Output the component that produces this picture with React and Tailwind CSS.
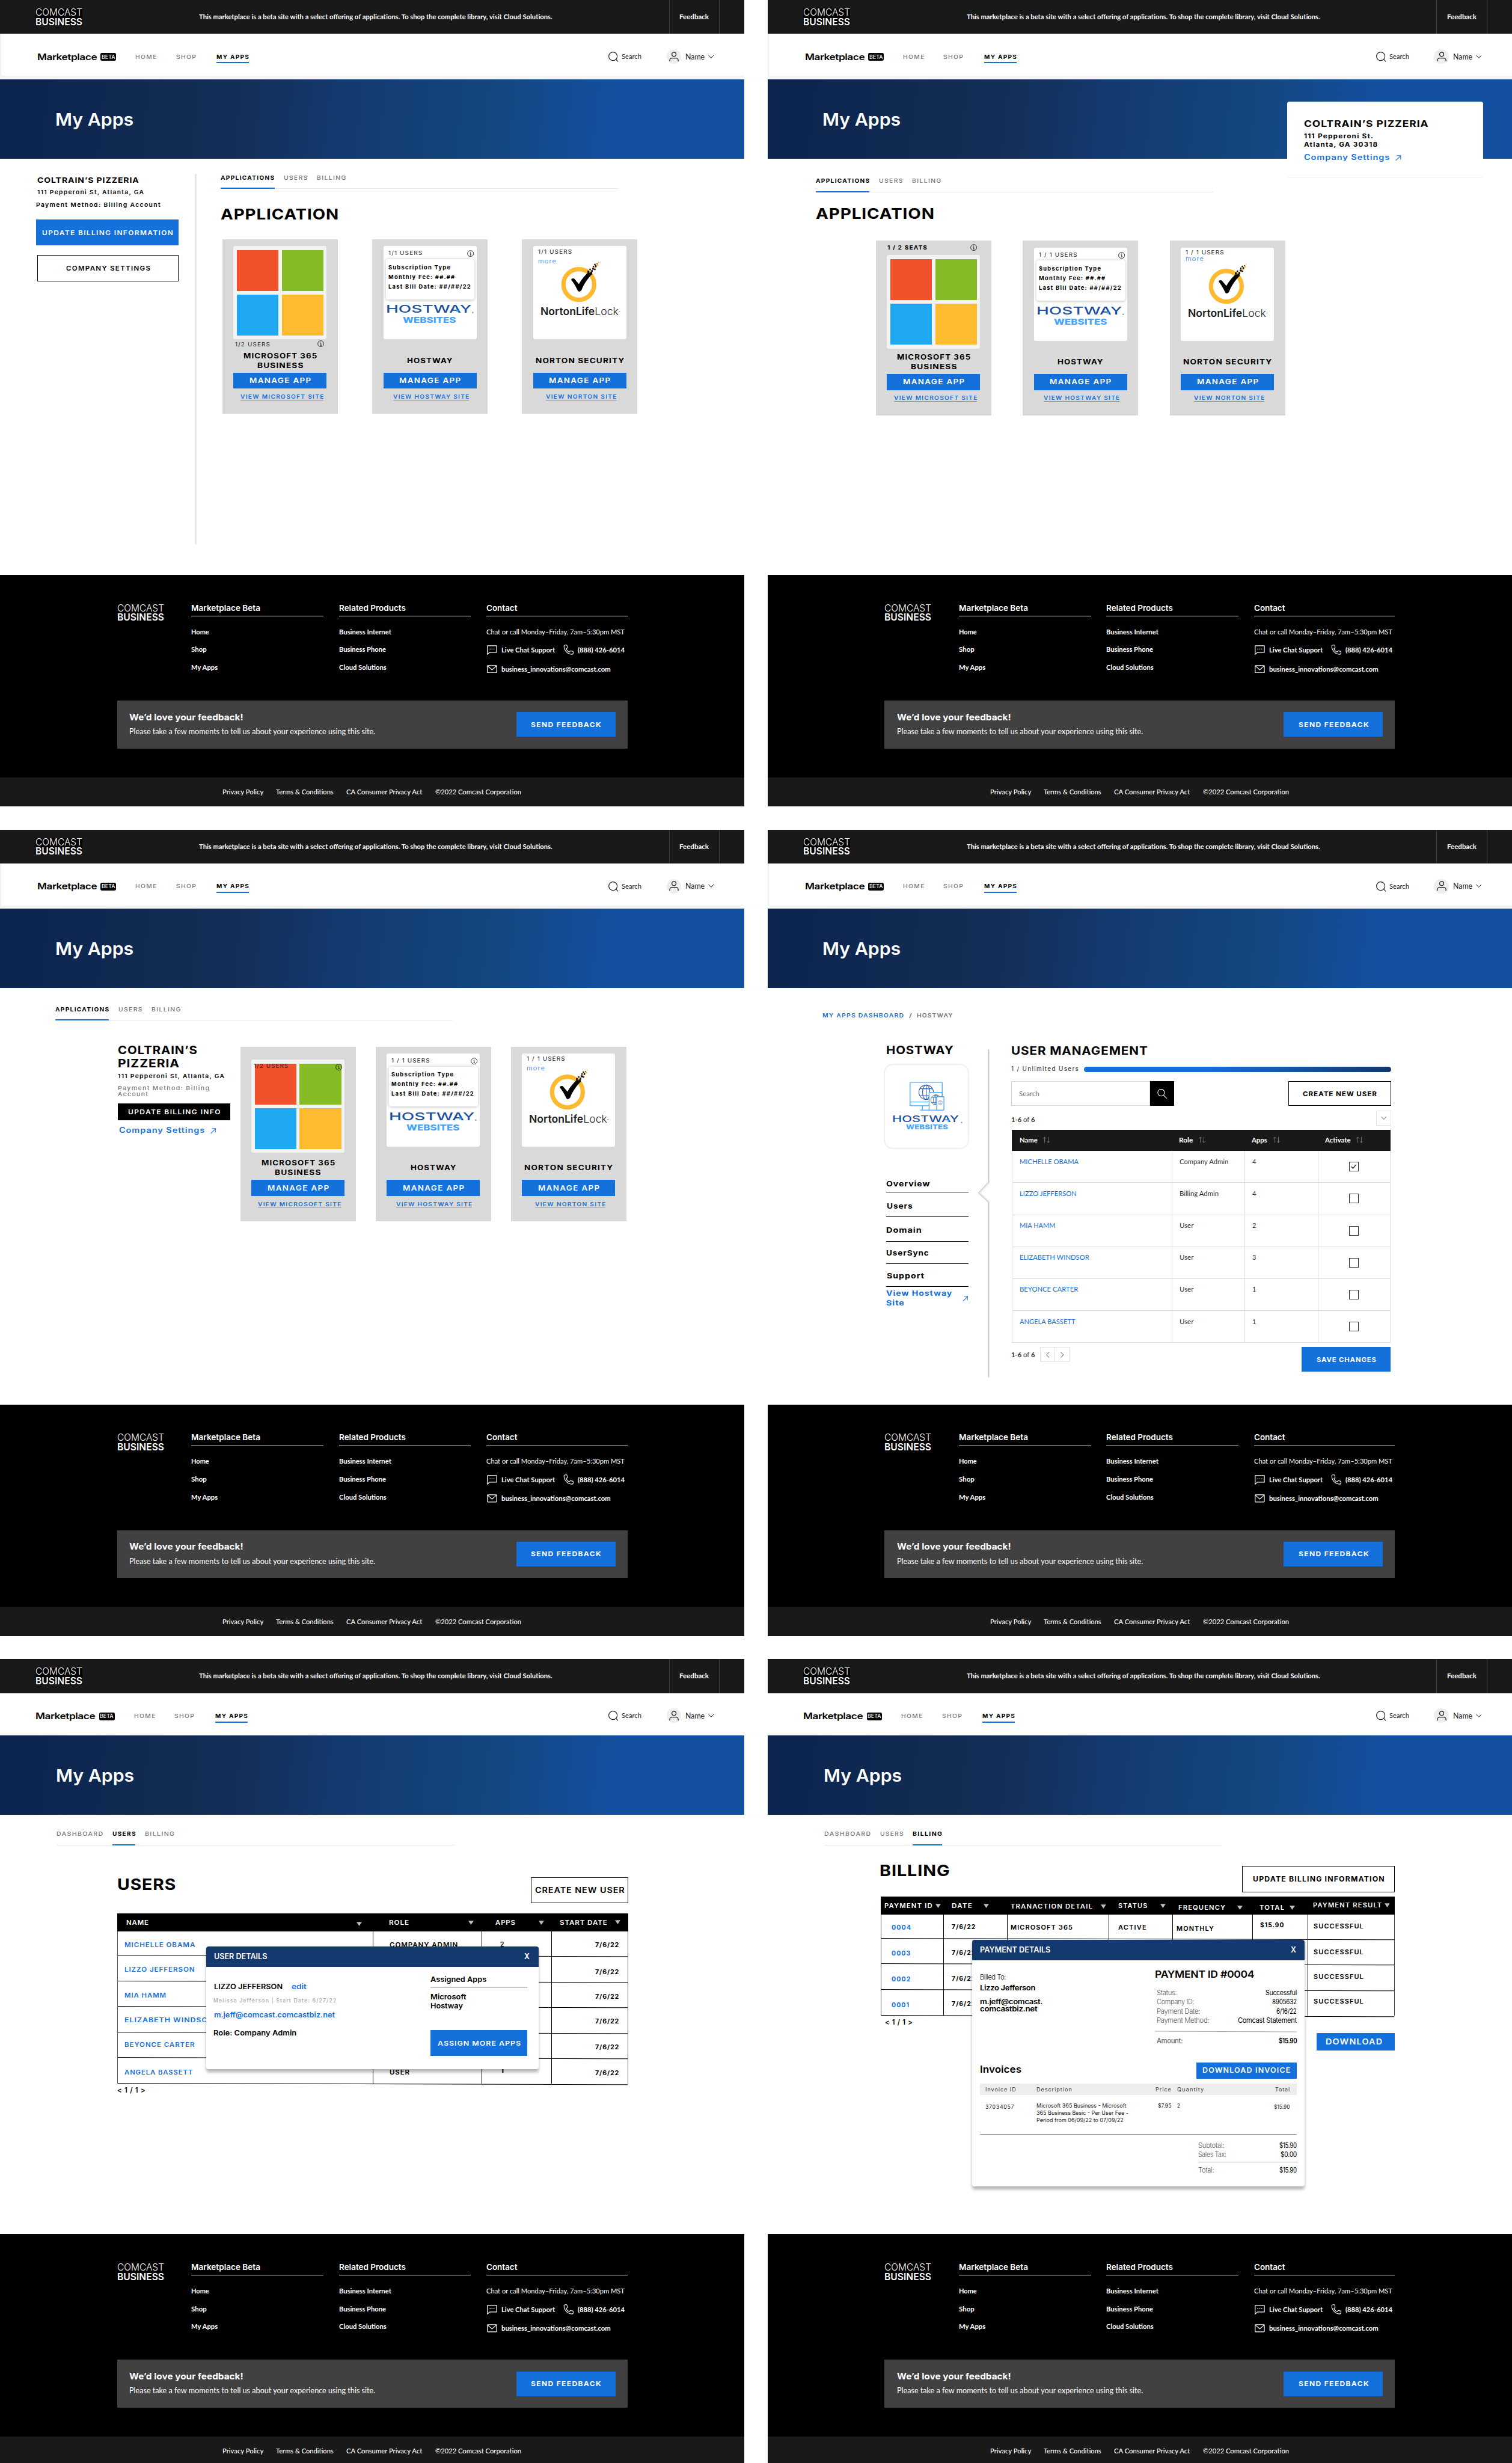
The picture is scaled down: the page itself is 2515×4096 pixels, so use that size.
import { useLayoutEffect, useRef } from 'react';

/* One line of text, stretched horizontally to the width of its box. */
function T({ className = '', children }) {
  const box = useRef(null);
  const ink = useRef(null);
  useLayoutEffect(() => {
    const o = box.current;
    const i = ink.current;
    i.style.transform = 'none';
    const factor = o.getBoundingClientRect().width / o.offsetWidth;
    const tracking = parseFloat(getComputedStyle(i).letterSpacing) || 0;
    const natural = i.getBoundingClientRect().width / factor - tracking;
    if (natural > 0) i.style.transform = `scaleX(${o.offsetWidth / natural})`;
  }, [children]);
  return (
    <span ref={box} className={`block h-[20px] shrink-0 whitespace-nowrap leading-[20px] ${className}`}>
      <span ref={ink} className="inline-block origin-left">{children}</span>
    </span>
  );
}

/* ---------- icons ---------- */

function InfoIcon({ className = '' }) {
  return (
    <svg viewBox="0 0 14 14" className={`h-[14px] w-[14px] shrink-0 ${className}`} fill="none" stroke="#000" strokeWidth="1">
      <circle cx="7" cy="7" r="6.2" />
      <path d="M5.8 5.9h1.4v4.3M5.6 10.3h3" />
      <circle cx="7" cy="3.8" r=".7" fill="#000" stroke="none" />
    </svg>
  );
}

function ArrowUpRight({ className = '' }) {
  return (
    <svg viewBox="0 0 12 12" className={`h-[12px] w-[12px] shrink-0 ${className}`} fill="none" stroke="#1470db" strokeWidth="1.4">
      <path d="M1 11L11 1M3 1h8v8" />
    </svg>
  );
}

function Chevron({ className = '' }) {
  return (
    <svg viewBox="0 0 12 8" className={`h-[8px] w-[12px] shrink-0 ${className}`} fill="none" stroke="currentColor" strokeWidth="1.2">
      <path d="M.5 1L6 6.8L11.5 1" />
    </svg>
  );
}

function SortArrows() {
  return (
    <svg viewBox="0 0 16 14" className="ml-[11px] mt-[2px] h-[14px] w-[16px]" fill="none" stroke="#8c8c8c" strokeWidth="1">
      <path d="M4.5 13V1.2M1.2 4.5L4.5 1.2L7.8 4.5M11.8 1v11.8M8.8 9.6l3 3.2l3-3.2" />
    </svg>
  );
}

function Triangle({ className = '' }) {
  return (
    <svg viewBox="0 0 12 9" className={`h-[9px] w-[11px] shrink-0 ${className}`}>
      <path d="M0 0h12L6 9z" fill="#bdbdbd" />
    </svg>
  );
}

function DevicesIcon() {
  return (
    <svg viewBox="0 0 72 60" className="ml-[51px] h-[60px] w-[72px]" fill="none" stroke="#45a3fb" strokeWidth="1.6">
      <rect x="1" y="1" width="66.5" height="48.5" rx="1.5" />
      <path d="M1 41.7H41M26.5 50v8.7M21.5 58.7H42" />
      <g stroke="#2c5aa6" strokeWidth="1.4">
        <circle cx="34.3" cy="21.7" r="15" />
        <ellipse cx="34.3" cy="21.7" rx="7.5" ry="15" />
        <path d="M34.3 6.7v30M21.5 14.4h25.6M21.5 29h25.6" />
      </g>
      <rect x="40.3" y="21.8" width="27" height="36.9" rx="1" fill="#fff" />
      <g stroke="#2c5aa6" strokeWidth="1.1">
        <circle cx="54.5" cy="37.5" r="10.5" />
        <ellipse cx="54.5" cy="37.5" rx="5.2" ry="10.5" />
        <path d="M54.5 27v21M45.6 32.4h18M45.6 42.6h18" />
      </g>
      <rect x="56" y="30.8" width="15" height="27.9" rx="1" fill="#fff" />
      <circle cx="63.6" cy="43" r="4.2" stroke="#7f97bf" strokeWidth=".9" />
      <path d="M59.5 41.4h8.2M59.5 44.6h8.2M63.6 39v8" stroke="#7f97bf" strokeWidth=".8" />
    </svg>
  );
}

function CompanyLogo() {
  return (
    <div className="w-[97px] text-[20px] text-white">
      <T className="w-[97px] font-light">COMCAST</T>
      <T className="-mt-[0.5px] w-[97px] font-semibold">BUSINESS</T>
    </div>
  );
}

/* ---------- page chrome ---------- */

function Header({ compact }) {
  return (
    <header>
      <div className="flex h-[70px] items-start bg-[#191919] pl-[74px]">
        <div className="mt-[18px] h-[34px] bg-black">
          <div className="-mt-[3px]">
            <CompanyLogo />
          </div>
        </div>
        <T className="ml-[241px] mt-[25px] w-[731px] font-['Lato',sans-serif] text-[14px] font-bold text-white">
          This marketplace is a beta site with a select offering of applications. To shop the complete library, visit Cloud Solutions.
        </T>
        <div className="ml-[241px] flex h-[70px] w-[105px] justify-center border-x border-[#3d3d3d] pt-[25px]">
          <T className="w-[61px] font-['Lato',sans-serif] text-[14px] font-bold text-white">Feedback</T>
        </div>
      </div>

      <div className={compact ? 'h-[88px]' : 'h-[94px] bg-gradient-to-b from-[#f1f1f1] from-90% to-[#f8f8f8]'}>
        <nav className="ml-[4px] flex h-[87px] items-start bg-white pr-[63px] pt-[38px] shadow-[-1px_0_0_#fff]">
          <T className={`w-[124px] text-[18px] font-semibold tracking-[-0.5px] ${compact ? 'ml-[70px]' : 'ml-[73px]'}`}>Marketplace</T>
          <div className="ml-[7px] mt-[2px] flex h-[16px] w-[32px] items-center justify-center rounded-[3px] bg-black">
            <T className="w-[28px] text-[11.500px] font-medium text-white">BETA</T>
          </div>
          <T className="ml-[40px] w-[44px] text-[11.5px] font-medium tracking-[1.5px] text-[#757575]">HOME</T>
          <T className="ml-[40px] w-[41px] text-[11.5px] font-medium tracking-[1.5px] text-[#757575]">SHOP</T>
          <div className="ml-[43px] h-[23px] border-b-[3px] border-[#1470db]">
            <T className="w-[67px] text-[11.5px] font-bold tracking-[1.5px]">MY APPS</T>
          </div>
          <svg viewBox="0 0 21 21" className="-mt-[1px] ml-auto h-[21px] w-[21px]" fill="none" stroke="#191919" strokeWidth="1.4">
            <circle cx="9.5" cy="9.5" r="8.7" />
            <path d="M15.3 15.3L20 20.3" />
          </svg>
          <T className="ml-[6px] mt-[-1px] w-[41px] font-['Lato',sans-serif] text-[14.5px] text-[#191919]">Search</T>
          <div className="-mt-[6px] ml-[52px] flex h-[30px] w-[30px] items-center justify-center rounded-full bg-[#eee]">
            <svg viewBox="0 0 20 21" className="h-[21px] w-[20px]" fill="none" stroke="#191919" strokeWidth="1.6">
              <circle cx="10" cy="5.4" r="4.3" />
              <path d="M1.2 20.3v-2.6a4.6 4.6 0 0 1 4.6-4.6h8.4a4.6 4.6 0 0 1 4.6 4.6v2.6" />
            </svg>
          </div>
          <T className="ml-[9px] w-[40px] font-['Lato',sans-serif] text-[15.5px] text-[#191919]">Name</T>
          <Chevron className="ml-[7px] mt-[5px] text-black" />
        </nav>
      </div>

      <div className="h-[164px] bg-[linear-gradient(96deg,#0b2450_0%,#102a52_18%,#142f57_32%,#133a70_46%,#144680_66%,#1450a0_82%,#1450a0_100%)] pt-[73px]">
        <T className={`w-[162px] text-[35px] font-semibold text-white ${compact ? 'ml-[116px]' : 'ml-[114px]'}`}>My Apps</T>
      </div>
    </header>
  );
}

function FooterColumn({ className, titleWidth, title, children }) {
  return (
    <div className={className}>
      <div className="h-[28px] border-b border-white text-[17px] font-semibold text-white">
        <T className={titleWidth}>{title}</T>
      </div>
      <div className="mt-[22px] font-['Lato',sans-serif] text-[14.5px] font-bold text-white">{children}</div>
    </div>
  );
}

function Footer() {
  return (
    <footer>
      <div className="h-[419px] bg-black px-[242px] pt-[58px]">
        <div className="flex h-[202px] items-start">
          <CompanyLogo />
          <FooterColumn className="ml-[57px] w-[273px]" titleWidth="w-[143px]" title="Marketplace Beta">
            <T className="w-[37px]">Home</T>
            <T className="mt-[17px] w-[32px]">Shop</T>
            <T className="mt-[17px] w-[55px]">My Apps</T>
          </FooterColumn>
          <FooterColumn className="ml-[32px] w-[273px]" titleWidth="w-[138px]" title="Related Products">
            <T className="w-[108px]">Business Internet</T>
            <T className="mt-[17px] w-[97px]">Business Phone</T>
            <T className="mt-[17px] w-[98px]">Cloud Solutions</T>
          </FooterColumn>
          <FooterColumn className="ml-[32px] w-[292px]" titleWidth="w-[64px]" title="Contact">
            <T className="w-[286px] font-normal">Chat or call Monday–Friday, 7am–5:30pm MST</T>
            <div className="mt-[18px] flex items-start">
              <svg viewBox="0 0 21 20" className="ml-[2px] h-[20px] w-[21px]" fill="none" stroke="#fff" strokeWidth="1.5">
                <path d="M1 19V1.2h19v13.6H5.5z" strokeLinejoin="round" />
                <path d="M5.5 8h2M9.5 8h2M13.5 8h2" />
              </svg>
              <T className="ml-[9px] w-[111px]">Live Chat Support</T>
              <svg viewBox="0 0 22 22" className="-mt-[1px] ml-[17px] h-[21px] w-[22px]" fill="none" stroke="#fff" strokeWidth="1.4" strokeLinejoin="round">
                <path d="M1 3C1 1.600 2.500 1 4 1h2.200c.8 0 1.200.5 1.300 1.200l.8 4c.1.600-.1 1.100-.6 1.500L5.600 9.200c1.200 3 3.500 5.600 6.900 7l1.700-2.100c.4-.5.9-.6 1.500-.5l3.900.9c.8.200 1.300.700 1.300 1.500V18c0 1.800-1 3-2.800 3C8.600 21 1 12.500 1 3z" />
              </svg>
              <T className="ml-[8px] w-[97px]">(888) 426-6014</T>
            </div>
            <div className="mt-[19px] flex items-center">
              <svg viewBox="0 0 21 17" className="ml-[2px] h-[17px] w-[21px]" fill="none" stroke="#fff" strokeWidth="1.5">
                <rect x="1" y="1" width="19" height="15" rx="1" />
                <path d="M1.500 2L10.500 10L19.500 2" />
              </svg>
              <T className="ml-[9px] w-[226px]">business_innovations@comcast.com</T>
            </div>
          </FooterColumn>
        </div>
        <div className="flex h-[99px] items-center justify-between bg-[#414141] pl-[26px] pr-[25px]">
          <div className="-mt-[1px] text-white">
            <T className="w-[236px] text-[17.5px] font-bold">We’d love your feedback!</T>
            <T className="mt-[9px] w-[509px] font-['Lato',sans-serif] text-[16px]">
              Please take a few moments to tell us about your experience using this site.
            </T>
          </div>
          <div className="flex h-[51px] w-[205px] items-center justify-center bg-[#1470db]">
            <T className="w-[145px] text-[13.5px] font-bold tracking-[1.5px] text-white">SEND FEEDBACK</T>
          </div>
        </div>
      </div>
      <div className="flex h-[60px] items-start gap-[26.5px] bg-[#191919] pl-[460px] pt-[20px] font-['Lato',sans-serif] text-[14.5px] font-medium text-white">
        <T className="w-[85px]">Privacy Policy</T>
        <T className="w-[119px]">Terms &amp; Conditions</T>
        <T className="w-[157px]">CA Consumer Privacy Act</T>
        <T className="w-[178px]">©2022 Comcast Corporation</T>
      </div>
    </footer>
  );
}

function Screen({ compact, children }) {
  return (
    <section className="relative h-[1668px] w-[1540px] overflow-hidden bg-white">
      <Header compact={compact} />
      <div className={compact ? 'h-[867px]' : 'h-[861px]'}>{children}</div>
      <Footer />
    </section>
  );
}

function Tabs({ items, active }) {
  return (
    <div className="flex h-[33px] w-[822px] gap-[19.500px] border-b border-[#e6e6e6]">
      {items.map(([label, width]) => (
        <div key={label} className={`h-[33px] ${label === active ? 'border-b-[3px] border-[#1470db]' : ''}`}>
          <T className={`text-[11.5px] tracking-[1.5px] ${width} ${label === active ? 'font-bold text-black' : 'font-medium text-[#757575]'}`}>
            {label}
          </T>
        </div>
      ))}
    </div>
  );
}

const APP_TABS = [['APPLICATIONS', 'w-[111px]'], ['USERS', 'w-[49px]'], ['BILLING', 'w-[60px]']];
const DASH_TABS = [['DASHBOARD', 'w-[96px]'], ['USERS', 'w-[48px]'], ['BILLING', 'w-[61px]']];

/* ---------- app cards ---------- */

function SiteLink({ className, width, children }) {
  return (
    <a className={`block h-[17px] border-b border-[#5b96dd] text-[11.8px] font-semibold tracking-[1.5px] text-[#1470db] ${className}`}>
      <T className={width}>{children}</T>
    </a>
  );
}

function AppCard({ title, link, children }) {
  return (
    <div className="h-[361px] w-[239px] bg-[#d9d9d9] px-[23px]">
      <div className="h-[231px]">{children}</div>
      <div className="flex h-[40px] flex-col items-center justify-center text-[14.5px] font-bold tracking-[1.2px]">{title}</div>
      <div className="mt-[5px] flex h-[33px] items-center justify-center bg-[#1470db]">
        <T className="w-[127px] text-[15px] font-semibold tracking-[1.5px] text-white">MANAGE APP</T>
      </div>
      <div className="mt-[7px]">{link}</div>
    </div>
  );
}

function MicrosoftTile({ children }) {
  return (
    <div className="relative grid h-[193px] w-[193px] grid-cols-2 gap-[7px] rounded-[4px] bg-[#f3f3f3] px-[7px] py-[8px]">
      <div className="bg-[#f1512b]" />
      <div className="bg-[#85bc25]" />
      <div className="bg-[#1ea8f2]" />
      <div className="bg-[#fdbb2f]" />
      {children}
    </div>
  );
}

function HostwayWordmark({ small }) {
  return (
    <div className="relative">
      <T className={small ? 'ml-[15px] w-[138px] text-[17.5px] font-medium text-[#1c4f9f]' : 'ml-[5px] w-[177px] text-[22px] font-medium text-[#1c4f9f]'}>
        HOSTWAY
      </T>
      <T
        className={
          small
            ? 'ml-[43px] -mt-[3px] w-[87px] text-[13px] font-extrabold text-[#45a3fb]'
            : 'ml-[41px] mt-[2px] w-[110px] text-[16.5px] font-extrabold text-[#45a3fb]'
        }
      >
        WEBSITES
      </T>
      <svg viewBox="0 0 193 20" preserveAspectRatio="none" className={`absolute left-0 top-0 h-[20px] ${small ? 'w-[166px]' : 'w-[193px]'}`}>
        <path d="M151 10.500l5.200 3l-5.200 3z" fill="#1bb5f5" />
        <circle cx="184.500" cy="17" r="1.600" fill="#7f9ac8" />
      </svg>
    </div>
  );
}

function HostwayCard({ users, usersWidth }) {
  return (
    <AppCard
      title={<T className="w-[94px]">HOSTWAY</T>}
      link={<SiteLink className="ml-[20px] w-[157px]" width="w-[157px]">VIEW HOSTWAY SITE</SiteLink>}
    >
      <div className="pt-[14px]">
        <div className="h-[193px] w-[193px] rounded-[4px] bg-white pt-[5px]">
          <div className="flex h-[22px] items-start pl-[10px] pr-[5px]">
            <T className={`text-[11.5px] tracking-[1.3px] text-[#222] ${usersWidth}`}>{users}</T>
            <InfoIcon className="ml-auto mt-[4px]" />
          </div>
          <div className="relative ml-[5px] h-[83px] w-[184px] rounded-[5px] bg-white pl-[5px] pt-[7px] text-[11.5px] font-bold tracking-[1.6px] shadow-[0_1px_6px_rgba(0,0,0,0.25)]">
            <div className="absolute right-[4px] -top-[3px] h-[7px] w-[7px] rotate-45 bg-white" />
            <T className="w-[128px]">Subscription Type</T>
            <T className="w-[137px]">Monthly Fee: ##.##</T>
            <T className="w-[170px]">Last Bill Date: ##/##/22</T>
          </div>
          <div className="mt-[11px]">
            <HostwayWordmark />
          </div>
        </div>
      </div>
    </AppCard>
  );
}

function NortonCard({ users, usersWidth, tight }) {
  return (
    <AppCard
      title={<T className="w-[183px]">NORTON SECURITY</T>}
      link={<SiteLink className="ml-[27px] w-[146px]" width="w-[146px]">VIEW NORTON SITE</SiteLink>}
    >
      <div className="pt-[14px]">
        <div className="relative h-[193px] w-[193px] rounded-[4px] bg-white">
          <svg viewBox="0 0 193 193" className="absolute inset-0 h-[193px] w-[193px]">
            <circle cx="94.300" cy="79.700" r="31.800" fill="none" stroke="#fdb92f" strokeWidth="9" />
            <path d="M78.500 70c.5-3 5.500-4 8-.5L94.500 79C98 71.500 106 62 114 54l7 5c-9 9-17 21-20.500 31c-1.500 5-7.500 6-9 1.500C89 86 84 77 78.500 70z" fill="#000" />
            <path d="M112 51h4v4h-4zM116 47h3v3h-3zM119 50h4v4h-4zM122 45h4v4h-4zM117 54h5v5h-5zM126 47h3v3h-3zM123 41h3v3h-3zM128 40h3v4h-3zM126 37h3v3h-3zM131 36h2v2h-2z" fill="#111" />
            <path d="M125 43h3v3h-3zM134 33h2v2h-2zM131 38h3v3h-3zM118 51h2v2h-2zM133 39h2v2h-2z" fill="#fdb92f" />
          </svg>
          <div className={`h-[126px] pl-[10px] text-[11.5px] tracking-[1.3px] ${tight ? 'pt-[1px]' : 'pt-[2px]'}`}>
            <T className={`text-[#222] ${usersWidth}`}>{users}</T>
            <T className={`w-[37px] font-light text-[#1470db] ${tight ? '-mt-[7px]' : ''}`}>more</T>
          </div>
          <T className="ml-[15px] w-[165px] text-[22px] font-semibold text-[#1c1c1c]">
            NortonLife<span className="font-light">Lock</span>
            <sup className="text-[6px] font-light">™</sup>
          </T>
        </div>
      </div>
    </AppCard>
  );
}

const microsoftTitle = (
  <>
    <T className="w-[152px]">MICROSOFT 365</T>
    <T className="w-[95px]">BUSINESS</T>
  </>
);
const microsoftLink = <SiteLink className="ml-[14px] w-[172px]" width="w-[172px]">VIEW MICROSOFT SITE</SiteLink>;

function SettingsLink({ className }) {
  return (
    <div className={`flex items-start ${className}`}>
      <T className="w-[177px] text-[15.5px] font-semibold tracking-[1px] text-[#1470db]">Company Settings</T>
      <ArrowUpRight className="ml-[12px] mt-[5px]" />
    </div>
  );
}

/* ---------- screens ---------- */

function SidebarDashboard() {
  return (
    <Screen>
      <div className="flex items-start">
        <div className="ml-[77px] w-[293px] pt-[35px] text-[11.5px] font-semibold tracking-[1.5px]">
          <T className="w-[210px] text-[15px] font-bold tracking-[1px]">COLTRAIN’S PIZZERIA</T>
          <T className="mt-[5px] w-[220px]">111 Pepperoni St, Atlanta, GA</T>
          <T className="-ml-[2px] mt-[6px] w-[257px]">Payment Method: Billing Account</T>
          <div className="-ml-[3px] mt-[20px] flex h-[54px] w-[296px] items-center justify-center bg-[#1470db] text-[13.5px] text-white">
            <T className="w-[271px]">UPDATE BILLING INFORMATION</T>
          </div>
          <div className="mt-[20px] flex h-[54px] w-[293px] items-center justify-center border-2 border-black text-[13.5px]">
            <T className="w-[174px]">COMPANY SETTINGS</T>
          </div>
        </div>
        <div className="ml-[33px] mt-[32px] h-[766px] w-[4px] rounded-full bg-[#e7e7e7] shadow-[0_0_2px_#eee]" />
        <div className="ml-[50px] pt-[30px]">
          <Tabs items={APP_TABS} active="APPLICATIONS" />
          <T className="mt-[42px] w-[244px] text-[31px] font-bold tracking-[1px]">APPLICATION</T>
          <div className="ml-[3px] mt-[42px] flex gap-[71px]">
            <AppCard title={microsoftTitle} link={microsoftLink}>
              <div className="pt-[14px]">
                <MicrosoftTile />
                <div className="mt-[1px] flex items-start pl-[4px] pr-[5px]">
                  <T className="w-[72px] text-[11.5px] tracking-[1.3px] text-[#222]">1/2 USERS</T>
                  <InfoIcon className="ml-auto mt-[1px]" />
                </div>
              </div>
            </AppCard>
            <HostwayCard users="1/1 USERS" usersWidth="w-[70px]" />
            <NortonCard users="1/1 USERS" usersWidth="w-[70px]" />
          </div>
        </div>
      </div>
    </Screen>
  );
}

function FloatingCardDashboard() {
  return (
    <Screen>
      <div className="absolute left-[1075px] top-[210px] h-[156px] w-[405px] rounded-[5px] bg-white pl-[35px] pt-[36px] text-[12.5px] font-bold tracking-[1.300px] shadow-[0_1px_0_#e6e6e6]">
        <T className="w-[257px] text-[18px] tracking-[1px]">COLTRAIN’S PIZZERIA</T>
        <T className="mt-[5px] w-[143px]">111 Pepperoni St.</T>
        <T className="-mt-[3px] w-[152px]">Atlanta, GA 30318</T>
        <SettingsLink className="mt-[8px]" />
      </div>
      <div className="pl-[100px] pt-[37px]">
        <Tabs items={APP_TABS} active="APPLICATIONS" />
        <T className="mt-[34px] w-[245px] text-[31px] font-bold tracking-[1px]">APPLICATION</T>
        <div className="ml-[124px] mt-[46px] flex gap-[65px]">
          <AppCard title={microsoftTitle} link={microsoftLink}>
            <div className="pt-[5px]">
              <div className="flex h-[25px] items-start pl-[1px] pr-[6px]">
                <T className="w-[82px] text-[11.5px] font-bold tracking-[1.3px]">1 / 2 SEATS</T>
                <InfoIcon className="ml-auto mt-[2px]" />
              </div>
              <MicrosoftTile />
            </div>
          </AppCard>
          <HostwayCard users="1 / 1 USERS" usersWidth="w-[79px]" />
          <NortonCard users="1 / 1 USERS" usersWidth="w-[79px]" tight />
        </div>
      </div>
    </Screen>
  );
}

function CompactDashboard() {
  return (
    <Screen>
      <div className="pl-[114px] pt-[34px]">
        <Tabs items={APP_TABS} active="APPLICATIONS" />
        <div className="ml-[130px] mt-[52px] flex items-start">
          <div className="w-[253px] text-[11.5px] font-semibold tracking-[1.500px]">
            <div className="text-[23.5px] font-bold tracking-[1px]">
              <T className="w-[164px]">COLTRAIN’S</T>
              <T className="mt-[7px] w-[127px]">PIZZERIA</T>
            </div>
            <T className="mt-[7px] w-[220px]">111 Pepperoni St, Atlanta, GA</T>
            <T className="mt-[4px] w-[189px] font-medium text-[#757575]">Payment Method: Billing</T>
            <T className="-mt-[7px] w-[62px] font-medium text-[#757575]">Account</T>
            <div className="mt-[8px] flex h-[35px] w-[233px] items-center justify-center bg-black text-[13.5px] text-white">
              <T className="w-[191px]">UPDATE BILLING INFO</T>
            </div>
            <SettingsLink className="ml-[2px] mt-[11px]" />
          </div>
          <div className="mt-[2px] flex gap-[41px]">
            <AppCard title={microsoftTitle} link={microsoftLink}>
              <div className="pt-[27px]">
                <MicrosoftTile>
                  <div className="absolute inset-x-[5px] top-[4px] flex items-start justify-between">
                    <T className="w-[71px] text-[11.5px] tracking-[1.3px] text-[#222]">1/2 USERS</T>
                    <InfoIcon className="mt-[5px]" />
                  </div>
                </MicrosoftTile>
              </div>
            </AppCard>
            <HostwayCard users="1 / 1 USERS" usersWidth="w-[79px]" />
            <NortonCard users="1 / 1 USERS" usersWidth="w-[79px]" />
          </div>
        </div>
      </div>
    </Screen>
  );
}

const HOSTWAY_USERS = [
  ['MICHELLE OBAMA', 'w-[122px]', 'Company Admin', 'w-[101px]', '4', true],
  ['LIZZO JEFFERSON', 'w-[118px]', 'Billing Admin', 'w-[81px]', '4'],
  ['MIA HAMM', 'w-[74px]', 'User', 'w-[29px]', '2'],
  ['ELIZABETH WINDSOR', 'w-[144px]', 'User', 'w-[29px]', '3'],
  ['BEYONCE CARTER', 'w-[121px]', 'User', 'w-[29px]', '1'],
  ['ANGELA BASSETT', 'w-[115px]', 'User', 'w-[29px]', '1'],
];

const SECTION_LINKS = [
  ['Overview', 'w-[90px]', 'h-[28px]'],
  ['Users', 'w-[53px] ml-[2px]', 'h-[50px] pt-[18px]'],
  ['Domain', 'w-[73px]', 'h-[51px] pt-[18px]'],
  ['UserSync', 'w-[88px]', 'h-[46px] pt-[14px]'],
  ['Support', 'w-[77px] ml-[2px]', 'h-[48px] pt-[16px]'],
];

function PageCount() {
  return (
    <T className="w-[49px] font-['Lato',sans-serif] text-[14.500px] text-[#333]">
      <b>1-6</b> of <b>6</b>
    </T>
  );
}

function UserManagement() {
  return (
    <Screen>
      <div className="flex pl-[114px] pt-[47px] text-[11.500px] font-semibold tracking-[1.300px]">
        <T className="w-[168px] text-[#1470db]">MY APPS DASHBOARD</T>
        <T className="ml-[11px] w-[6px] text-[#757575]">/</T>
        <T className="ml-[10px] w-[74px] text-[#757575]">HOSTWAY</T>
      </div>
      <div className="ml-[243px] mt-[51px] flex items-start">
        <div className="w-[173px]">
          <T className="ml-[2px] w-[139px] text-[22.500px] font-bold tracking-[1px]">HOSTWAY</T>
          <div className="mt-[21px] h-[172px] w-[172px] rounded-[16px] bg-white pt-[35px] shadow-[0_0_4px_rgba(0,0,0,0.22)]">
            <DevicesIcon />
            <div className="mt-[7px]">
              <HostwayWordmark small />
            </div>
          </div>
          <div className="ml-[2px] mt-[64px] text-[15px] font-bold tracking-[1px]">
            {SECTION_LINKS.map(([label, width, height]) => (
              <div key={label} className={`border-b-[1.5px] border-black ${height}`}>
                <T className={width}>{label}</T>
              </div>
            ))}
            <div className="mt-[4px] flex items-center text-[#1470db]">
              <div>
                <T className="w-[136px]">View Hostway</T>
                <T className="w-[37px]">Site</T>
              </div>
              <ArrowUpRight className="ml-[22px]" />
            </div>
          </div>
        </div>
        <svg viewBox="0 0 26 680" className="ml-[20px] mt-[8px] h-[680px] w-[26px] overflow-visible" fill="none">
          <path d="M22.500 0V275L2 297L22.500 316V680" stroke="#efefef" strokeWidth="5" />
          <path d="M21.500 0V275L1 297L21.500 316V678" stroke="#b5b5b5" strokeWidth="1.200" />
        </svg>

        <div className="ml-[42px] w-[786px]">
          <T className="mt-[1px] w-[282px] text-[22.500px] font-bold tracking-[1px]">USER MANAGEMENT</T>
          <div className="mt-[18px] flex items-center">
            <T className="w-[139px] text-[12px] font-normal tracking-[1.600px] text-[#222]">1 / Unlimited Users</T>
            <div className="ml-[12px] mt-[2px] h-[11px] w-[635px] rounded-full bg-gradient-to-r from-[#1470db] from-40% to-[#12386f]" />
          </div>
          <div className="mt-[16px] flex h-[51px] items-stretch">
            <div className="flex w-[287px] items-center border border-[#d5d5d5] pl-[15px]">
              <T className="w-[42px] font-['Lato',sans-serif] text-[14.500px] text-[#6c6c6c]">Search</T>
            </div>
            <div className="flex w-[50px] items-center justify-center bg-black">
              <svg viewBox="0 0 20 20" className="h-[20px] w-[20px]" fill="none" stroke="#fff" strokeWidth="1.300">
                <circle cx="8" cy="7.500" r="7" />
                <path d="M12.800 12.500L19.500 19.500" />
              </svg>
            </div>
            <div className="ml-auto flex w-[213px] items-center justify-center border-2 border-black">
              <T className="w-[153px] text-[13.500px] font-bold tracking-[1px]">CREATE NEW USER</T>
            </div>
          </div>
          <div className="mt-[9px] flex h-[31px] items-center justify-between">
            <div className="pt-[8px]"><PageCount /></div>
            <div className="flex h-[31px] w-[31px] items-center justify-center border border-[#e4e4e4] text-[#555]">
              <Chevron />
            </div>
          </div>

          <div className="ml-[1px] mt-[9px] w-[784px] font-['Lato',sans-serif] text-[14.500px]">
            <div className="flex h-[44px] bg-[#191919] pt-[12px] font-bold text-white">
              <div className="flex w-[331px] pl-[16px]"><T className="w-[37px]">Name</T><SortArrows /></div>
              <div className="flex w-[151px] pl-[15px]"><T className="w-[29px]">Role</T><SortArrows /></div>
              <div className="flex w-[151px] pl-[15px]"><T className="w-[32px]">Apps</T><SortArrows /></div>
              <div className="flex w-[151px] pl-[15px]"><T className="w-[53px]">Activate</T><SortArrows /></div>
            </div>
            {HOSTWAY_USERS.map(([name, nameWidth, role, roleWidth, apps, checked]) => (
              <div key={name} className="flex h-[66.100px] border-x border-b border-[#dcdcdc] text-[#333]">
                <div className="w-[331px] border-r border-[#dcdcdc] pl-[15px] pt-[12px]">
                  <T className={`text-[#1470db] ${nameWidth}`}>{name}</T>
                </div>
                <div className="w-[151px] border-r border-[#dcdcdc] pl-[15px] pt-[12px]">
                  <T className={roleWidth}>{role}</T>
                </div>
                <div className="w-[151px] border-r border-[#dcdcdc] pl-[15px] pt-[12px]">
                  <T className="w-[8px]">{apps}</T>
                </div>
                <div className="flex flex-1 items-center justify-center">
                  <div className="flex h-[20px] w-[20px] items-center justify-center border-2 border-[#333]">
                    {checked && (
                      <svg viewBox="0 0 12 10" className="h-[10px] w-[12px]" fill="none" stroke="#222" strokeWidth="1.800">
                        <path d="M1 5l3.300 3.600L11 .8" />
                      </svg>
                    )}
                  </div>
                </div>
              </div>
            ))}
          </div>

          <div className="mt-[9px] flex items-start">
            <div className="mt-[6px]"><PageCount /></div>
            <div className="ml-[11px] flex h-[31px] w-[61px] border border-[#e4e4e4] text-[#444]">
              <div className="flex flex-1 items-center justify-center border-r border-[#e4e4e4]"><Chevron className="rotate-90" /></div>
              <div className="flex flex-1 items-center justify-center"><Chevron className="-rotate-90" /></div>
            </div>
            <div className="ml-auto mr-[1px] flex h-[51px] w-[184px] items-center justify-center bg-[#1470db]">
              <T className="w-[123px] text-[13.500px] font-bold tracking-[1px] text-white">SAVE CHANGES</T>
            </div>
          </div>
        </div>
      </div>
    </Screen>
  );
}

const RowRule = () => <div className="absolute inset-x-0 bottom-0 h-[1.300px] origin-left rotate-[0.150deg] bg-black" />;

/* Rows behind the open dialog carry no role or app count. */
const USERS = [
  ['MICHELLE OBAMA', 'w-[146px] mt-[17px]', '7/6/22', 'mt-[17px]', 'COMPANY ADMIN', 'w-[141px] mt-[17px]', '2', 'h-[50px]'],
  ['LIZZO JEFFERSON', 'w-[145px] mt-[19px]', '7/6/22', 'mt-[24px]', null, '', null, 'h-[53px]'],
  ['MIA HAMM', 'w-[86px] mt-[19px]', '7/6/22', 'mt-[22px]', null, '', null, 'h-[53px]'],
  ['ELIZABETH WINDSOR', 'w-[183px] mt-[17px]', '7/6/22', 'mt-[19px]', null, '', null, 'h-[53px]'],
  ['BEYONCE CARTER', 'w-[145px] mt-[15px]', '7/6/22', 'mt-[20px]', null, '', null, 'h-[53px]'],
  ['ANGELA BASSETT', 'w-[141px] mt-[19px]', '7/6/22', 'mt-[20px]', 'USER', 'w-[41px] mt-[19px]', '1', 'h-[53px]'],
];

function Modal({ title, titleWidth, className, children }) {
  return (
    <div className={`absolute w-[688px] rounded-[5px] bg-white shadow-[0_6px_7px_rgba(0,0,0,0.3)] ${className}`}>
      <div className="flex h-[43px] items-center justify-between rounded-t-[5px] bg-[#13396f] pl-[17px] pr-[18px] text-[15.500px] font-semibold text-white">
        <T className={titleWidth}>{title}</T>
        <T className="w-[11px]">X</T>
      </div>
      {children}
    </div>
  );
}

function UsersScreen() {
  return (
    <Screen compact>
      <div className="pl-[117px] pt-[30px]"><Tabs items={DASH_TABS} active="USERS" /></div>
      <div className="ml-[243px] mt-[66px] w-[1057px]">
        <div className="flex h-[54px] items-start justify-between">
          <T className="mt-[5px] w-[121px] text-[32px] font-bold tracking-[1px]">USERS</T>
          <div className="flex h-[54px] w-[202px] items-center justify-center border-2 border-black">
            <T className="mt-[2px] w-[185px] text-[15.500px] font-semibold tracking-[1px]">CREATE NEW USER</T>
          </div>
        </div>
        <div className="mt-[21px] flex h-[37px] bg-black pt-[9px] text-[12.500px] font-semibold tracking-[1px] text-white">
          <div className="flex w-[528px] pl-[18px] pr-[22px]"><T className="w-[46px]">NAME</T><Triangle className="ml-auto mt-[8px]" /></div>
          <div className="flex w-[225px] pl-[34px] pr-[16px]"><T className="w-[41px]">ROLE</T><Triangle className="ml-auto mt-[6px]" /></div>
          <div className="flex w-[145px] pl-[29px] pr-[15px]"><T className="w-[41px]">APPS</T><Triangle className="ml-auto mt-[6px]" /></div>
          <div className="flex w-[159px] pl-[17px] pr-[17px]"><T className="w-[98px]">START DATE</T><Triangle className="ml-auto mt-[5px]" /></div>
        </div>
        <div className="border-x border-[#555] text-[12.500px] font-semibold tracking-[1px]">
          {USERS.map(([name, nameClass, date, dateClass, role, roleClass, apps, height]) => (
            <div key={name} className={`relative flex ${height}`}>
              <div className="w-[528px] border-r border-black pl-[13px]"><T className={`text-[#1470db] ${nameClass}`}>{name}</T></div>
              <div className="w-[225px] border-r border-black pl-[34px]">{role && <T className={roleClass}>{role}</T>}</div>
              <div className="w-[145px] border-r border-black pl-[38px] pt-[16px]">{apps && <T className="w-[8px]">{apps}</T>}</div>
              <div className="flex flex-1 justify-end pr-[18px]"><T className={`w-[49px] font-bold ${dateClass}`}>{date}</T></div>
              <RowRule />
            </div>
          ))}
        </div>
        <T className="mt-[4px] w-[58px] text-[15px] font-semibold tracking-[1px]">&lt; 1 / 1 &gt;</T>
      </div>

      <Modal title="USER DETAILS" titleWidth="w-[110px]" className="left-[426px] top-[594px] h-[254px]">
        <div className="flex justify-between pl-[16px] pr-[23px] text-[15px] font-semibold">
          <div className="pt-[30px]">
            <div className="flex">
              <T className="ml-[1px] w-[142px] font-semibold">LIZZO JEFFERSON</T>
              <T className="ml-[18px] w-[31px] text-[#1470db]">edit</T>
            </div>
            <T className="mt-[9px] w-[254px] text-[11px] font-normal tracking-[1.500px] text-[#999]">Melissa Jefferson | Start Date: 6/27/22</T>
            <T className="ml-[1px] mt-[10px] w-[250px] text-[#1470db]">m.jeff@comcast.comcastbiz.net</T>
            <T className="mt-[17px] w-[172px]">Role: Company Admin</T>
          </div>
          <div className="w-[200px] pt-[16px]">
            <T className="w-[116px]">Assigned Apps</T>
            <div className="mt-[5px] h-[2px] bg-[#c6c6c6]" />
            <T className="mt-[9px] w-[74px]">Microsoft</T>
            <T className="-mt-[2px] w-[67px]">Hostway</T>
            <div className="mt-[40px] flex h-[54px] items-center justify-center bg-[#1470db]">
              <T className="w-[172px] text-[13.500px] font-semibold tracking-[1px] text-white">ASSIGN MORE APPS</T>
            </div>
          </div>
        </div>
      </Modal>
    </Screen>
  );
}

const PAYMENTS = [
  ['0004', 'w-[40px] mt-[17px]', 'mt-[15px]', 'mt-[14px]', 'h-[50px]', true],
  ['0003', 'w-[39px] mt-[20px]', 'mt-[19px]', 'mt-[17px]', 'h-[53px]', false],
  ['0002', 'w-[39px] mt-[20px]', 'mt-[19px]', 'mt-[16px]', 'h-[53px]', false],
  ['0001', 'w-[36px] mt-[21px]', 'mt-[18px]', 'mt-[14px]', 'h-[53px]', false],
];

const PAYMENT_FACTS = [
  ['Status:', 'w-[42px]', 'Successful', 'w-[65px]'],
  ['Company ID:', 'w-[78px]', '8905632', 'w-[51px]'],
  ['Payment Date:', 'w-[90px]', '6/16/22', 'w-[42px]'],
  ['Payment Method:', 'w-[109px]', 'Comcast Statement', 'w-[122px]'],
];

function BillingScreen() {
  return (
    <Screen compact>
      <div className="pl-[117px] pt-[30px]"><Tabs items={DASH_TABS} active="BILLING" /></div>
      <div className="ml-[234px] mt-[43px] w-[1064px]">
        <div className="flex h-[54px] items-start justify-between">
          <T className="-ml-[2px] w-[145px] text-[32px] font-bold tracking-[1px]">BILLING</T>
          <div className="flex h-[54px] w-[316px] items-center justify-center border-2 border-black">
            <T className="mt-[1px] w-[272px] text-[14px] font-bold tracking-[1.300px]">UPDATE BILLING INFORMATION</T>
          </div>
        </div>
        <div className="mt-[9px] flex h-[37px] items-start bg-black text-[12.500px] font-semibold tracking-[1.300px] text-white">
          <div className="flex w-[130px] pl-[8px] pr-[6px] pt-[9px]"><T className="w-[99px]">PAYMENT ID</T><Triangle className="ml-auto mt-[6px]" /></div>
          <div className="flex w-[132px] pl-[17px] pr-[38px] pt-[9px]"><T className="w-[42px]">DATE</T><Triangle className="ml-auto mt-[6px]" /></div>
          <div className="flex w-[210px] pl-[7px] pr-[6px] pt-[10px]"><T className="w-[169px]">TRANACTION DETAIL</T><Triangle className="ml-auto mt-[6px]" /></div>
          <div className="flex w-[132px] pl-[19px] pr-[14px] pt-[9px]"><T className="w-[60px]">STATUS</T><Triangle className="ml-auto mt-[6px]" /></div>
          <div className="flex w-[166px] pl-[12px] pr-[21px] pt-[12px]"><T className="w-[97px]">FREQUENCY</T><Triangle className="ml-auto mt-[7px]" /></div>
          <div className="flex w-[114px] pl-[14px] pr-[27px] pt-[13px]"><T className="w-[51px]">TOTAL</T><Triangle className="ml-auto mt-[6px]" /></div>
          <div className="flex w-[178px] pl-[11px] pr-[9px] pt-[7px]"><T className="w-[142px]">PAYMENT RESULT</T><Triangle className="ml-auto mt-[7px]" /></div>
        </div>
        <div className="w-[1063px] border-x border-[#444] text-[12.800px] font-semibold tracking-[1.300px]">
          {PAYMENTS.map(([id, idClass, dateClass, resultClass, height, open]) => (
            <div key={id} className={`relative flex ${height}`}>
              <div className="w-[129px] border-r border-black pl-[21px]"><T className={`font-bold text-[#1470db] ${idClass}`}>{id}</T></div>
              <div className="w-[132px] border-r border-black pl-[17px]"><T className={`w-[49px] font-bold ${dateClass}`}>7/6/22</T></div>
              <div className="w-[210px] border-r border-black pl-[7px] pt-[16px]">{open && <T className="w-[128px]">MICROSOFT 365</T>}</div>
              <div className="w-[132px] border-r border-black pl-[19px] pt-[16px]">{open && <T className="w-[58px]">ACTIVE</T>}</div>
              <div className="w-[166px] border-r border-black pl-[8px] pt-[19px]">{open && <T className="w-[77px]">MONTHLY</T>}</div>
              <div className="w-[114px] border-r border-black pl-[15px] pt-[11px]">{open && <T className="w-[49px] font-bold">$15.90</T>}</div>
              <div className="flex-1 pl-[11px]"><T className={`w-[103px] ${resultClass}`}>SUCCESSFUL</T></div>
              <RowRule />
            </div>
          ))}
        </div>
        <T className="ml-[9px] mt-[4px] w-[57px] text-[15px] font-semibold tracking-[1px]">&lt; 1 / 1 &gt;</T>
        <div className="ml-auto mt-[13px] flex h-[35px] w-[162px] items-center bg-[#1470db] pl-[19px]">
          <T className="mt-[2px] w-[117px] text-[15.500px] font-semibold tracking-[1.300px] text-white">DOWNLOAD</T>
        </div>
      </div>

      <Modal title="PAYMENT DETAILS" titleWidth="w-[146px]" className="left-[423px] top-[580px] h-[510px]">
        <div className="px-[16px]">
          <div className="flex h-[211px] justify-between text-[14px] tracking-[-0.400px]">
            <div className="pt-[25px] text-[15px] font-semibold">
              <T className="w-[54px] text-[14px] font-light">Billed To:</T>
              <T className="mt-[2px] w-[115px]">Lizzo Jefferson</T>
              <T className="mt-[9px] w-[130px]">m.jeff@comcast.</T>
              <T className="-mt-[6px] w-[119px]">comcastbiz.net</T>
            </div>
            <div className="w-[294px] pt-[19px]">
              <T className="w-[206px] text-[20.500px] font-semibold">PAYMENT ID #0004</T>
              <div className="ml-[4px] mt-[18px]">
                {PAYMENT_FACTS.map(([label, labelWidth, value, valueWidth]) => (
                  <div key={label} className="-mb-[1px] flex justify-between">
                    <T className={`font-light text-[#555] ${labelWidth}`}>{label}</T>
                    <T className={valueWidth}>{value}</T>
                  </div>
                ))}
              </div>
              <div className="mt-[14px] h-px rotate-[0.250deg] bg-[#a5a5a5]" />
              <div className="ml-[4px] mt-[9px] flex justify-between font-medium">
                <T className="w-[54px] text-[#666]">Amount:</T>
                <T className="w-[38px] font-semibold">$15.90</T>
              </div>
            </div>
          </div>
          <div className="flex items-start justify-between">
            <T className="mt-[4px] w-[86px] text-[20.500px] font-semibold">Invoices</T>
            <div className="flex h-[34px] w-[208px] items-center justify-center bg-[#1470db]">
              <T className="w-[182px] text-[14px] font-semibold tracking-[1.300px] text-white">DOWNLOAD INVOICE</T>
            </div>
          </div>
          <div className="mt-[10px] flex h-[24px] items-center bg-[#ededed] pl-[11px] text-[10.500px] tracking-[1.200px] text-[#333]">
            <T className="w-[63px]">Invoice ID</T>
            <T className="ml-[43px] w-[73px]">Description</T>
            <T className="ml-[174px] w-[32px]">Price</T>
            <T className="ml-[12px] w-[55px]">Quantity</T>
            <T className="ml-[148px] w-[30px]">Total</T>
          </div>
          <div className="flex h-[81px] items-start border-b border-[#999] pl-[11px] pt-[12px] text-[10.500px] text-[#222]">
            <T className="mt-[3px] w-[59px] tracking-[0.800px]">37034057</T>
            <div className="ml-[47px] w-[190px]">
              <T className="w-[186px]">Microsoft 365 Business - Microsoft</T>
              <T className="-mt-[5px] w-[190px]">365 Business Basic - Per User Fee -</T>
              <T className="-mt-[5px] w-[180px]">Period from 06/09/22 to 07/09/22</T>
            </div>
            <T className="ml-[61px] w-[28px]">$7.95</T>
            <T className="ml-[12px] w-[6px]">2</T>
            <T className="ml-[195px] mt-[3px] w-[33px]">$15.90</T>
          </div>
          <div className="ml-auto w-[204px] pt-[13px] text-[14px] tracking-[-0.400px]">
            <div className="flex justify-between">
              <T className="w-[54px] font-light text-[#555]">Subtotal:</T>
              <T className="w-[36px]">$15.90</T>
            </div>
            <div className="-mt-[1px] flex justify-between">
              <T className="w-[58px] font-light text-[#555]">Sales Tax:</T>
              <T className="w-[34px]">$0.00</T>
            </div>
            <div className="-mr-[2px] mt-[5px] h-px bg-[#a5a5a5]" />
            <div className="mt-[6px] flex justify-between">
              <T className="w-[33px] font-light text-[#555]">Total:</T>
              <T className="w-[36px]">$15.90</T>
            </div>
          </div>
        </div>
      </Modal>
    </Screen>
  );
}

export default function App() {
  return (
    <div className="h-[4096px] w-[2515px] overflow-hidden bg-white">
      <main className="grid w-[3128px] grid-cols-[1540px_1540px] gap-[48px] bg-white font-['Inter',sans-serif] text-black [zoom:0.804]">
        <SidebarDashboard />
        <FloatingCardDashboard />
        <CompactDashboard />
        <UserManagement />
        <UsersScreen />
        <BillingScreen />
      </main>
    </div>
  );
}
